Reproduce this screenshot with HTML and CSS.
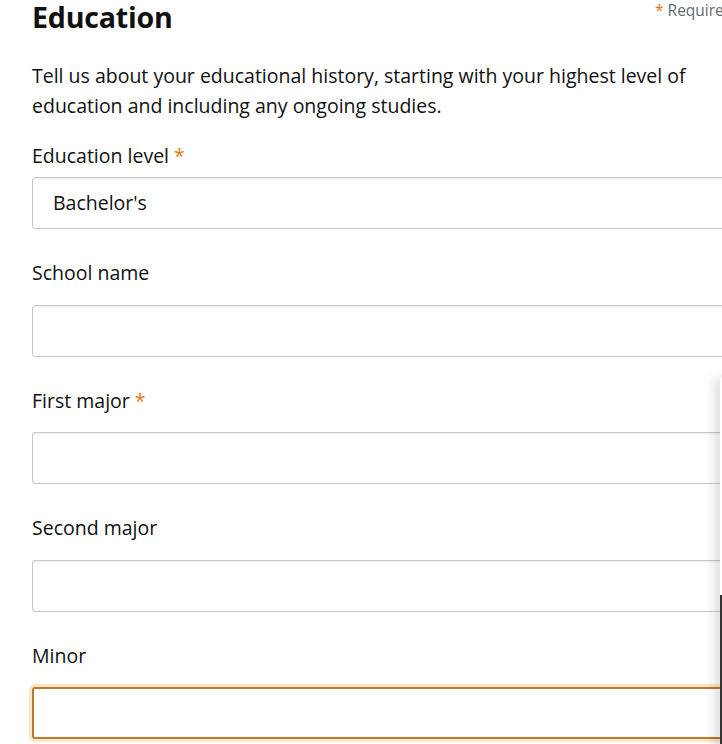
FILE: index.html
```html
<!DOCTYPE html>
<html lang="en">
<head>
<meta charset="utf-8">
<link rel="stylesheet" href="styles.css">
</head>
<body>
<div class="page">
  <div class="header">
    <h1 class="title">Education</h1>
    <div class="required"><span class="star">*</span> Required</div>
  </div>
  <p class="intro">Tell us about your educational history, starting with your highest level of education and including any ongoing studies.</p>
  <div class="field first">
    <label class="label">Education level <span class="star">*</span></label>
    <div class="input select">Bachelor's</div>
  </div>
  <div class="field">
    <label class="label">School name</label>
    <div class="input"></div>
  </div>
  <div class="field">
    <label class="label">First major <span class="star">*</span></label>
    <div class="input"></div>
  </div>
  <div class="field">
    <label class="label">Second major</label>
    <div class="input"></div>
  </div>
  <div class="field">
    <label class="label">Minor</label>
    <div class="input focus"></div>
  </div>
</div>
<div class="panel"></div>
<div class="edge"></div>
</body>
</html>
```

FILE: styles.css
```css
html, body {
  margin: 0;
  padding: 0;
  background: #fff;
  overflow: hidden;
  width: 722px;
  height: 744px;
}
body {
  font-family: "Open Sans", "Noto Sans", sans-serif;
  color: #0f1111;
  position: relative;
}
.page {
  width: 760px;
  padding: 0 0 0 32px;
  box-sizing: border-box;
}
.header {
  display: flex;
  align-items: flex-start;
  justify-content: space-between;
  width: 690px;
}
.title {
  margin: 0;
  font-size: 28.6px;
  font-weight: 700;
  line-height: 34px;
  letter-spacing: -0.2px;
}
.required {
  font-size: 15.5px;
  color: #5f6b77;
  line-height: 20px;
  width: 67px;
  white-space: nowrap;
  overflow: hidden;
}
.star {
  color: #e47911;
}
.intro {
  margin: 27px 0 0;
  font-size: 19.5px;
  line-height: 30px;
  width: 680px;
}
.field {
  display: flex;
  flex-direction: column;
}
.field + .field {
  margin-top: 32px;
}
.intro + .field {
  margin-top: 23px;
}
.label {
  font-size: 19.5px;
  line-height: 24px;
  margin-bottom: 19.5px;
}
.first .label {
  margin-bottom: 9px;
}
.input {
  height: 52px;
  box-sizing: border-box;
  border: 1px solid #c8c8c8;
  border-radius: 3px;
  background: #fff;
  box-shadow: inset 0 1px 2px rgba(15,17,17,0.08);
  font-size: 19.5px;
  line-height: 50px;
  padding-left: 20px;
}
.focus {
  border: 2px solid #b87a2c;
  box-shadow: 0 0 0 3px #fde6c4;
  background: #fff;
}
.panel {
  position: absolute;
  left: 720px;
  top: 378px;
  width: 300px;
  height: 400px;
  background: #fff;
  box-shadow: -6px 0 10px rgba(0,0,0,0.12);
}
.edge {
  position: absolute;
  left: 720px;
  top: 595px;
  width: 2px;
  height: 160px;
  background: #333;
}
```
